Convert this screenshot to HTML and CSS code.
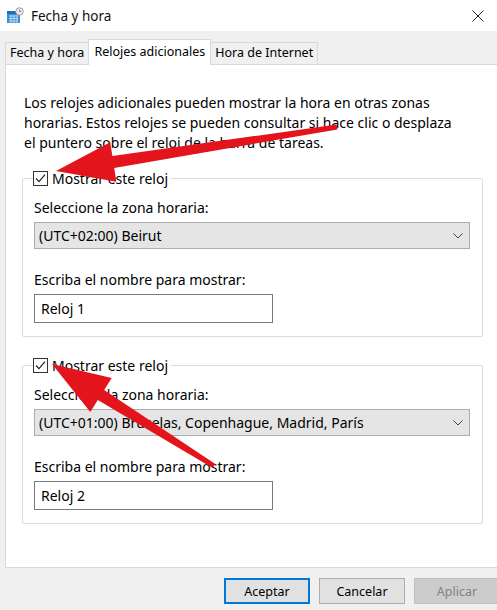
FILE: index.html
```html
<!DOCTYPE html>
<html lang="es">
<head>
    <meta charset="UTF-8">
    <title>Fecha y hora</title>
    <link rel="stylesheet" href="styles.css">
</head>
<body>
    <div class="window">
        <div class="titlebar">
            <svg class="app-icon" width="18" height="18" viewBox="0 0 18 18">
                <rect x="1" y="4" width="13" height="12" fill="#3b8fd6"/>
                <rect x="1" y="4" width="13" height="3" fill="#1f6fb8"/>
                <path d="M3 9h9M3 11.5h9M3 14h9M5 8v8M8 8v8M11 8v8" stroke="#cfe6f8" stroke-width="0.8"/>
                <circle cx="13.5" cy="4.5" r="3.8" fill="#e8e8e8" stroke="#8c8c8c" stroke-width="0.8"/>
                <path d="M13.5 2.5v2h1.5" stroke="#555" stroke-width="0.7" fill="none"/>
            </svg>
            <span class="title">Fecha y hora</span>
            <svg class="close" width="12" height="12" viewBox="0 0 12 12">
                <path d="M0.5 0.5l11 11M11.5 0.5l-11 11" stroke="#222" stroke-width="1"/>
            </svg>
        </div>

        <div class="tabs">
            <div class="tab">Fecha y hora</div>
            <div class="tab active">Relojes adicionales</div>
            <div class="tab">Hora de Internet</div>
        </div>

        <div class="panel">
            <p class="intro">Los relojes adicionales pueden mostrar la hora en otras zonas horarias. Estos relojes se pueden consultar si hace clic o desplaza el puntero sobre el reloj de la barra de tareas.</p>

            <fieldset class="group">
                <legend class="group-legend">
                    <span class="checkbox"><svg width="13" height="13" viewBox="0 0 13 13"><path d="M2 6.5l3 3.2 6-7" stroke="#222" stroke-width="1.2" fill="none"/></svg></span>
                    Mostrar este reloj
                </legend>
                <div class="field-label">Seleccione la zona horaria:</div>
                <div class="select">
                    <span>(UTC+02:00) Beirut</span>
                    <svg class="chevron" width="10" height="6" viewBox="0 0 10 6"><path d="M0.5 0.5l4.5 4.5 4.5-4.5" stroke="#444" fill="none"/></svg>
                </div>
                <div class="field-label second">Escriba el nombre para mostrar:</div>
                <div class="text-input">Reloj 1</div>
            </fieldset>

            <fieldset class="group">
                <legend class="group-legend">
                    <span class="checkbox"><svg width="13" height="13" viewBox="0 0 13 13"><path d="M2 6.5l3 3.2 6-7" stroke="#222" stroke-width="1.2" fill="none"/></svg></span>
                    Mostrar este reloj
                </legend>
                <div class="field-label">Seleccione la zona horaria:</div>
                <div class="select">
                    <span>(UTC+01:00) Bruselas, Copenhague, Madrid, París</span>
                    <svg class="chevron" width="10" height="6" viewBox="0 0 10 6"><path d="M0.5 0.5l4.5 4.5 4.5-4.5" stroke="#444" fill="none"/></svg>
                </div>
                <div class="field-label second">Escriba el nombre para mostrar:</div>
                <div class="text-input">Reloj 2</div>
            </fieldset>
        </div>

        <div class="footer">
            <button class="btn default">Aceptar</button>
            <button class="btn">Cancelar</button>
            <button class="btn disabled">Aplicar</button>
        </div>
    </div>

    <!-- red annotation arrows drawn over the dialog -->
    <svg class="arrows" width="497" height="610" viewBox="0 0 497 610">
        <polygon fill="#e3141b" points="337.4,129.5 114.2,167.9 116.4,181.8 56,171 110.2,142.2 112.4,156.1 336.6,124.5"/>
        <polygon fill="#e3141b" points="215.3,463.9 104.2,389.9 111.7,378.1 52,364 90.3,411.9 97.8,400.1 212.7,468.1"/>
    </svg>
</body>
</html>
```

FILE: styles.css
```css
/* Dialog base */
* {
    box-sizing: border-box;
}

body {
    margin: 0;
    width: 497px;
    height: 610px;
    overflow: hidden;
    position: relative;
    background: #f0f0f0;
    font-family: 'Noto Sans', 'Open Sans', sans-serif;
    font-size: 14px;
    color: #000;
}

.window {
    width: 512px;
}

/* Title bar */
.titlebar {
    height: 31px;
    background: #fff;
    display: flex;
    align-items: center;
    padding-left: 6px;
}

.app-icon {
    margin-right: 7px;
}

.title {
    font-size: 13.5px;
    color: #111;
}

.close {
    margin-left: auto;
    margin-right: 28px;
}

/* Tabs */
.tabs {
    display: flex;
    align-items: flex-end;
    padding: 7px 0 0 5px;
    height: 33px;
    font-size: 12.5px;
}

.tab {
    height: 22px;
    padding: 0 4px;
    line-height: 20px;
    border: 1px solid #d9d9d9;
    border-bottom: none;
    background: #f0f0f0;
    margin-right: -1px;
    white-space: nowrap;
}

.tab.active {
    height: 26px;
    line-height: 23px;
    background: #fff;
    margin-bottom: -1px;
    position: relative;
    padding: 0 5px;
}

/* Panel */
.panel {
    margin-left: 5px;
    height: 504px;
    background: #fff;
    border: 1px solid #d9d9d9;
    padding: 0 16px;
}

.intro {
    margin: 28px 0 16px 2px;
    line-height: 20px;
    width: 440px;
}

.group {
    width: 461px;
    margin: 0 0 19px;
    border: 1px solid #dcdcdc;
    border-radius: 2px;
    padding: 0 11px 13px;
}

.group-legend {
    padding: 0 3px 0 0;
    margin-left: -1px;
    display: flex;
    align-items: center;
    gap: 4px;
    height: 18px;
}

.checkbox {
    width: 15px;
    height: 15px;
    border: 1px solid #333;
    background: #fff;
    display: flex;
    align-items: center;
    justify-content: center;
}

.field-label {
    margin-top: 12px;
    line-height: 18px;
}

.field-label.second {
    margin-top: 22px;
}

.select {
    margin-top: 5px;
    width: 436px;
    height: 27px;
    background: #e5e5e5;
    border: 1px solid #adadad;
    display: flex;
    align-items: center;
    padding: 0 6px 0 4px;
}

.chevron {
    margin-left: auto;
}

.text-input {
    margin-top: 5px;
    width: 239px;
    height: 29px;
    border: 1px solid #7a7a7a;
    background: #fff;
    padding: 0 6px;
    line-height: 27px;
}

/* Buttons */
.footer {
    display: flex;
    justify-content: flex-end;
    gap: 9px;
    padding: 10px 12px 0 0;
}

.btn {
    width: 86px;
    height: 26px;
    font-family: inherit;
    font-size: 12.5px;
    background: #e1e1e1;
    border: 1px solid #adadad;
    color: #000;
    padding: 0;
}

.btn.default {
    border: 2px solid #0078d7;
}

.btn.disabled {
    background: #cccccc;
    border-color: #bfbfbf;
    color: #838383;
}

/* Annotation overlay */
.arrows {
    position: absolute;
    top: 0;
    left: 0;
    pointer-events: none;
}
```
